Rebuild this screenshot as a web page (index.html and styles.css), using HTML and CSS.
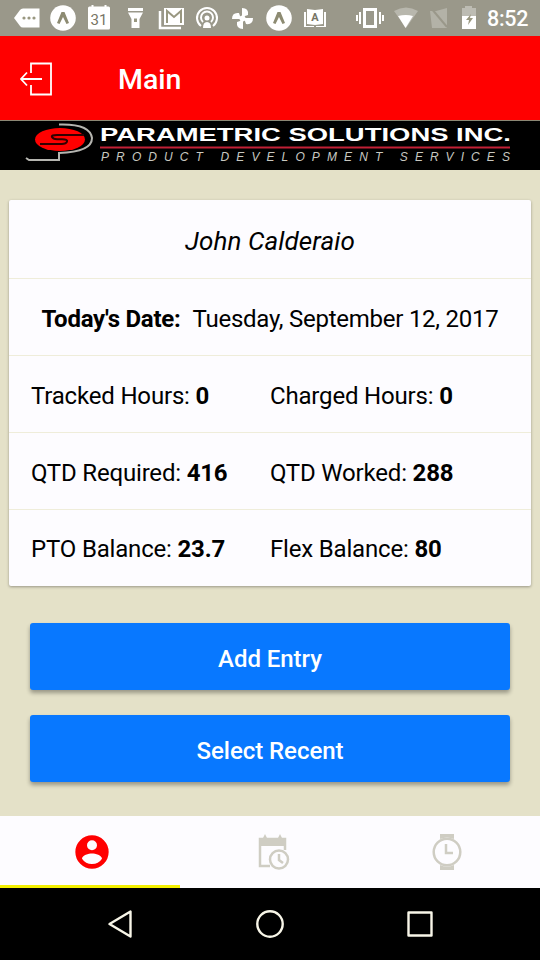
FILE: index.html
```html
<!DOCTYPE html>
<html lang="en">
<head>
<meta charset="utf-8">
<title>Main</title>
<link rel="stylesheet" href="styles.css">
</head>
<body>
<div class="phone">
  <div class="status">
    <svg class="status-icons" width="480" height="36" viewBox="0 0 480 36" fill="#fff">
      <path d="M14 18l6-8q1-1.500 3-1.500h16.500v19H23q-2 0-3-1.500z"/>
      <g fill="#999780"><circle cx="24" cy="18" r="1.600"/><circle cx="29" cy="18" r="1.600"/><circle cx="34" cy="18" r="1.600"/></g>
      <circle cx="63" cy="18" r="12.800"/>
      <path d="M57 23l4.500-11h3l4.500 11-2.500 1-3.500-7-3.500 7z" fill="#8d8b72"/>
      <path d="M88 8q0-1.500 1.500-1.500h2V5h2v1.500h11V5h2v1.500h2Q110 6.500 110 8v20q0 1.500-1.500 1.500h-19Q88 29.500 88 28z"/>
      <text class="cal-day" x="99" y="25" text-anchor="middle">31</text>
      <path d="M128 8h15v3h-15zM128 12.500h15l-3.500 6.500v9h-8v-9z"/><path d="M134 18.500h3v3.500h-3z" fill="#999780"/>
      <path d="M164 8h20v17h-20z"/><path d="M160 11v17h21" fill="none" stroke="#fff" stroke-width="2.500"/><path d="M167 23V11l7 6 7-6v12" fill="none" stroke="#999780" stroke-width="2"/>
      <g fill="none" stroke="#fff" stroke-width="2"><path d="M201 26a10 10 0 1 1 12 0M203 22a6 6 0 1 1 8 0"/></g><circle cx="207" cy="18" r="2.500"/><path d="M203 28q0-6 4-6t4 6z"/>
      <path d="M242 17V8q7 0 6 7zM244 18h9q0 7-7 6zM243 20v9q-7 0-6-7zM241 19h-9q0-7 7-6z"/><circle cx="242.500" cy="18.500" r="3"/>
      <circle cx="279" cy="18" r="12.800"/>
      <path d="M273 23l4.500-11h3l4.500 11-2.500 1-3.500-7-3.500 7z" fill="#8d8b72"/>
      <path d="M307 9l8 1 8-1v15l-8 1-8-1zM304 12h2v14h8v1h-10zM324 12h2v15h-10v-1h8z"/>
      <text class="book-a" x="315" y="21" text-anchor="middle">A</text>
      <g><path d="M363 8h14v20h-14zM366 11v14h8V11z" fill-rule="evenodd"/><path d="M359 12h2v12h-2zM356 15h2v6h-2zM379 12h2v12h-2zM382 15h2v6h-2z"/></g>
      <path d="M394 11q12-7 24 0l-12 17z" opacity=".3"/><path d="M398 16q8-2 15 0l-7.500 12z"/>
      <path d="M430 11h6l11-3v20h-15z" opacity=".25"/><path d="M431 8l16 19" stroke="#9a988a" stroke-width="2"/>
      <path d="M462 8h3V6h7v2h4v8h-14z" opacity=".35"/><path d="M462 16h14v13h-14z"/><path d="M471 14l-5 6h3l-1 5 5-7h-3z" fill="#999780"/>
    </svg>
    <span class="clock">8:52</span>
  </div>
  <header class="appbar">
    <svg class="exit" width="34" height="36" viewBox="0 0 34 36" fill="none" stroke="#fff" stroke-width="1.800"><path d="M12 12V2.500h20v31H12v-9.500M2 18h21M8 11.500L2 18l6 6.500"/></svg>
    <h1>Main</h1>
  </header>
  <div class="banner">
    <svg width="540" height="50" viewBox="0 0 540 50">
      <ellipse cx="60" cy="18.500" rx="25" ry="11.500" fill="#f00"/>
      <path d="M84 14H57q-6 0-5 2t5 2.200h5q6 0 5 2.500t-6 2.300H40" fill="none" stroke="#300" stroke-width="2"/>
      <path d="M59 3.500q31-1 33 13.500 0 14-33 15v7H29l-3-2" fill="none" stroke="#b5b5b0" stroke-width="2"/>
      <text class="brand" x="100" y="20" textLength="411" lengthAdjust="spacingAndGlyphs">PARAMETRIC SOLUTIONS INC.</text>
      <path d="M100 26.500h410" stroke="#c22036" stroke-width="1.800"/>
      <text class="tagline" x="101" y="39.500" textLength="409">PRODUCT DEVELOPMENT SERVICES</text>
    </svg>
  </div>
  <main>
    <section class="card">
      <div class="row name">John Calderaio</div>
      <div class="row date"><b>Today's Date:</b><span>Tuesday, September 12, 2017</span></div>
      <div class="row pair"><span>Tracked Hours: <b>0</b></span><span>Charged Hours: <b>0</b></span></div>
      <div class="row pair"><span>QTD Required: <b>416</b></span><span>QTD Worked: <b>288</b></span></div>
      <div class="row pair"><span>PTO Balance: <b>23.7</b></span><span>Flex Balance: <b>80</b></span></div>
    </section>
    <div class="actions"><button>Add Entry</button><button>Select Recent</button></div>
  </main>
  <nav class="tabs">
    <div class="tab active"><svg width="40" height="40" viewBox="0 0 24 24" fill="#f00"><path d="M12 2a10 10 0 1 0 0 20 10 10 0 0 0 0-20zm0 3a3 3 0 1 1 0 6 3 3 0 0 1 0-6zm0 14.200a7.200 7.200 0 0 1-6-3.220c.03-1.990 4-3.080 6-3.080s5.970 1.090 6 3.080a7.200 7.200 0 0 1-6 3.220z"/></svg></div>
    <div class="tab"><svg width="40" height="40" viewBox="0 0 40 40" fill="none" stroke="#cfcdc3" stroke-width="2.500"><path d="M18 34H8V7h25v11"/><path d="M7 6h4l2-4 2 4h11l2-4 2 4h4v8H7z" fill="#cfcdc3" stroke="none"/><circle cx="27" cy="27.500" r="9"/><path d="M27 22v6l4 3"/></svg></div>
    <div class="tab watch"><svg width="40" height="40" viewBox="0 0 40 40" fill="none" stroke="#cfcdc3" stroke-width="2.500"><circle cx="20" cy="20" r="13.300"/><path d="M13 2h14v5q-7-3-14 0zM13 38h14v-5q-7 3-14 0z" fill="#cfcdc3" stroke="none"/><path d="M19 12v9h7"/></svg></div>
  </nav>
  <div class="system">
    <svg viewBox="0 0 40 40"><path d="M9.500 20L30.500 7.500v25z"/></svg>
    <svg viewBox="0 0 40 40"><circle cx="20" cy="20" r="12.700"/></svg>
    <svg viewBox="0 0 40 40"><path d="M8.500 8.500h23v23h-23z"/></svg>
  </div>
</div>
</body>
</html>
```
FILE: styles.css
```css
* { box-sizing: border-box; }
body { margin: 0; font-family: Roboto, "Liberation Sans", sans-serif; color: #000; }
svg { display: block; flex: none; }
.phone { width: 540px; height: 960px; display: flex; flex-direction: column; background: #e4e1c8; overflow: hidden; }
.status { height: 36px; display: flex; align-items: center; background: #9a988a; color: #fff; flex: none; }
.cal-day { font-size: 15px; fill: #777565; }
.book-a { font-size: 11px; font-weight: 700; fill: #777565; }
.clock { font-size: 21.500px; font-weight: 500; margin-left: 7px; letter-spacing: -.3px; }
.appbar { height: 84px; flex: none; background: #f00; display: flex; align-items: center; padding: 2px 0 0 19px; color: #fff; }
h1 { margin: 0 0 0 65px; font-size: 28.500px; font-weight: 500; }
.banner { height: 50px; flex: none; background: #000; border-top: 1px solid #8b8774; }
.brand { font: 700 18.500px "Liberation Sans", sans-serif; fill: #fff; }
.tagline { font: italic 12px "Liberation Sans", sans-serif; fill: #c8c8c0; }
main { flex: 1; padding: 30px 9px 0; }
.card { height: 386px; background: #fdfcff; border-radius: 2px; box-shadow: 0 1px 3px #0005; }
.row { height: 77px; display: flex; align-items: center; border-bottom: 1px solid #efedda; font-size: 24px; letter-spacing: -.18px; padding-top: 3px; }
.row:last-child { height: 76px; border-bottom: 0; padding-top: 1px; }
.name { height: 79px; justify-content: center; font-size: 26px; font-style: italic; letter-spacing: .1px; }
.date { justify-content: center; gap: 12px; letter-spacing: -.25px; padding-top: 4px; }
.pair { padding-left: 22px; }
.pair span { width: 239px; white-space: nowrap; }
.actions { padding: 37px 21px 0; display: flex; flex-direction: column; gap: 25px; }
button { height: 67px; border: 0; border-radius: 3px; background: #0878ff; color: #fff; font: 500 24px Roboto, sans-serif; letter-spacing: -.05px; padding: 4px 0 0; box-shadow: 0 3px 4px #0005; }
.tabs { height: 72px; flex: none; display: grid; grid-template-columns: repeat(3, 1fr); background: #fdfcff; }
.tab { display: flex; align-items: center; justify-content: center; border-bottom: 3px solid transparent; padding: 2px 0 0 3px; }
.tab.watch { padding: 2px 7px 0 0; }
.active { border-color: #f4f000; }
.system { height: 72px; flex: none; background: #000; display: flex; justify-content: center; gap: 110px; align-items: center; }
.system svg { width: 40px; height: 40px; fill: none; stroke: #f8f6e8; stroke-width: 2.400; stroke-linejoin: round; }
```
